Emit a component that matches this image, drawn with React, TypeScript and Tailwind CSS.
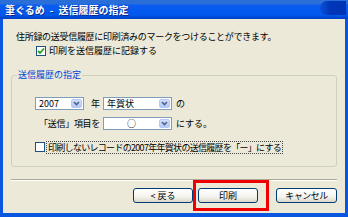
import React from "react";

function Chevron() {
  return (
    <svg width="7" height="5" viewBox="0 0 7 5">
      <path d="M1 1 L3.5 3.5 L6 1" fill="none" stroke="#4d6185" strokeWidth="1.6" />
    </svg>
  );
}

function DropBtn() {
  return (
    <div className="my-[1px] mr-[1px] flex w-[11px] items-center justify-center rounded-[2px] border border-[#b7c9f4] bg-[linear-gradient(#d2defc,#b4c8f6)]">
      <Chevron />
    </div>
  );
}

function XPButton({ children, className }: { children: React.ReactNode; className: string }) {
  return (
    <div
      className={
        "flex h-[15px] items-center justify-center rounded-[3px] border border-[#003c74] bg-[linear-gradient(#ffffff,#f4f3ee_60%,#dcd8c8)] text-[9px] leading-none text-black " +
        className
      }
    >
      {children}
    </div>
  );
}

export default function App() {
  return (
    <div className="flex h-[217px] w-[348px] flex-col overflow-hidden bg-[#0a56de] font-['Noto_Sans_CJK_JP',sans-serif]">
      {/* title bar */}
      <div className="flex h-[19px] shrink-0 items-center bg-[linear-gradient(to_bottom,#2a6fd8_0px,#2a6fd8_4px,#0a5cf0_5px,#0058ee_15px,#0044cc_18px,#003fc4_19px)] pl-[5px]">
        <span className="flex items-center text-[10px] font-bold leading-none text-white [text-shadow:1px_1px_0_#0a2a8a]">
          <span>筆ぐるめ</span>
          <span className="mx-[5px]">-</span>
          <span>送信履歴の指定</span>
        </span>
        <div className="ml-auto mr-[2px] mb-[3px] h-[14px] w-[26px] rounded-l-[10px] bg-[linear-gradient(to_right,#0a4fd8,#0036b8_40%,#0034b4)]" />
      </div>

      {/* body */}
      <div className="relative mx-[3px] mb-[4px] flex flex-1 flex-col bg-[#ece9d8] text-[9px] leading-[12px] text-black">
        <div className="mt-[12px] pl-[13px] tracking-[-0.3px]">
          住所録の送受信履歴に印刷済みのマークをつけることができます。
        </div>
        <div className="mt-[2px] flex h-[12px] items-center pl-[33px]">
          <div className="flex h-[10px] w-[10px] items-center justify-center border border-[#1c5180] bg-white">
            <svg width="8" height="8" viewBox="0 0 8 8">
              <path d="M1 4 L3 6 L7 1.5" fill="none" stroke="#21a121" strokeWidth="1.8" />
            </svg>
          </div>
          <span className="ml-[3px]">印刷を送信履歴に記録する</span>
        </div>

        <fieldset className="ml-[8px] mt-[12px] h-[98px] w-[326px] rounded-[3px] border border-[#d0d0bf]">
          <legend className="ml-[5px] px-[1px] leading-[12px] text-[#0046d5]">送信履歴の指定</legend>
          <div className="flex flex-col pl-[23px]">
            <div className="mt-[16px] flex h-[13px] items-center">
              <div className="flex h-[13px] w-[49px] items-stretch border border-[#7f9db9] bg-white">
                <div className="flex flex-1 items-center pl-[3px] leading-none">2007</div>
                <DropBtn />
              </div>
              <span className="ml-[7px]">年</span>
              <div className="ml-[3px] flex h-[13px] w-[69px] items-stretch border border-[#7f9db9] bg-white">
                <div className="flex flex-1 items-center pl-[3px] leading-none">年賀状</div>
                <DropBtn />
              </div>
              <span className="ml-[4px]">の</span>
            </div>
            <div className="mt-[7px] flex h-[13px] items-center">
              <span className="w-[65px] text-right tracking-[-0.3px]">「送信」項目を</span>
              <div className="ml-[3px] flex h-[13px] w-[69px] items-stretch border border-[#7f9db9] bg-white">
                <div className="flex flex-1 items-center justify-center leading-none">○</div>
                <DropBtn />
              </div>
              <span className="ml-[4px]">にする。</span>
            </div>
            <div className="mt-[11px] flex h-[12px] items-center">
              <div className="h-[10px] w-[10px] border border-[#1c5180] bg-white" />
              <span className="ml-[2px] px-[1px] leading-[11px] tracking-[-0.7px] outline-1 outline-dotted outline-[#444]">
                印刷しないレコードの2007年年賀状の送信履歴を「ー」にする
              </span>
            </div>
          </div>
        </fieldset>

        <div className="ml-[8px] mt-[12px] h-[2px] w-[326px] border-t border-b border-t-[#aca899] border-b-white" />

        <div className="mt-[7px] flex pr-[8px] justify-end">
          <XPButton className="w-[60px]">&lt;&nbsp;戻る</XPButton>
          <XPButton className="ml-[5px] w-[60px]">印刷</XPButton>
          <XPButton className="ml-[18px] w-[61px] tracking-[-0.5px]">キャンセル</XPButton>
        </div>

        <div className="absolute left-[190px] top-[161px] h-[31px] w-[76px] border-[3px] border-[#ee0000]" />
      </div>
    </div>
  );
}
